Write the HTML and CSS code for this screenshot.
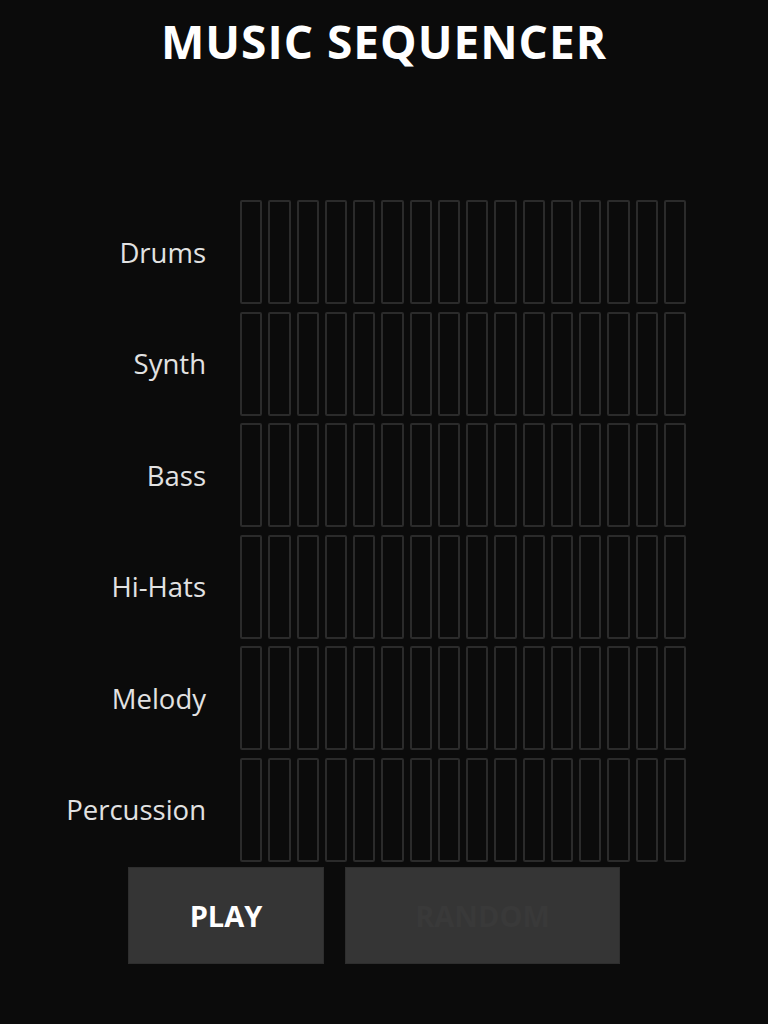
FILE: index.html
```html
<!DOCTYPE html>
<html lang="en">
<head>
<meta charset="utf-8">
<title>Music Sequencer</title>
<link rel="stylesheet" href="styles.css">
</head>
<body>
<div class="app">
  <h1 class="title">MUSIC SEQUENCER</h1>
  <div class="tracks" id="tracks"></div>
  <div class="controls">
    <button class="btn btn-play">PLAY</button>
    <button class="btn btn-second" disabled>RANDOM</button>
  </div>
</div>
<script src="app.js"></script>
</body>
</html>
```
FILE: styles.css
```css
html, body {
  margin: 0;
  padding: 0;
  background: #0b0b0b;
}
body {
  width: 768px;
  height: 1024px;
  overflow: hidden;
  font-family: "Open Sans", "Noto Sans", sans-serif;
  color: #e6e6e6;
}
.app {
  display: flex;
  flex-direction: column;
}
.title {
  margin: 13px 0 0 0;
  text-align: center;
  font-size: 46px;
  line-height: 56px;
  font-weight: 700;
  color: #ffffff;
  letter-spacing: 1px;
}
.tracks {
  margin-top: 131px;
  display: flex;
  flex-direction: column;
  gap: 7.6px;
}
.track {
  display: flex;
  align-items: center;
  height: 104px;
}
.label {
  width: 206px;
  text-align: right;
  font-size: 27.5px;
  color: #e2e2e2;
  padding-right: 34px;
}
.cells {
  width: 446px;
  height: 104px;
  display: grid;
  grid-template-columns: repeat(16, 1fr);
  column-gap: 6px;
}
.cell {
  box-sizing: border-box;
  border: 2px solid #2b2b2b;
  border-radius: 2px;
  background: #0b0b0b;
}
.controls {
  display: flex;
  gap: 21px;
  padding-left: 128px;
  margin-top: 5px;
}
.btn {
  height: 97px;
  border: 1px solid #2e2e2e;
  background: #353535;
  font-family: "Open Sans", "Noto Sans", sans-serif;
  font-weight: 700;
  font-size: 29px;
  color: #ffffff;
  padding: 0;
}
.btn-play {
  width: 196px;
}
.btn-second {
  width: 275px;
  color: #393939;
}
```
FILE: app.js
```js
var names = ["Drums", "Synth", "Bass", "Hi-Hats", "Melody", "Percussion"];
var tracks = document.getElementById("tracks");
names.forEach(function (n) {
  var row = document.createElement("div");
  row.className = "track";
  var label = document.createElement("div");
  label.className = "label";
  label.textContent = n;
  row.appendChild(label);
  var cells = document.createElement("div");
  cells.className = "cells";
  for (var i = 0; i < 16; i++) {
    var c = document.createElement("div");
    c.className = "cell";
    cells.appendChild(c);
  }
  row.appendChild(cells);
  tracks.appendChild(row);
});
```
